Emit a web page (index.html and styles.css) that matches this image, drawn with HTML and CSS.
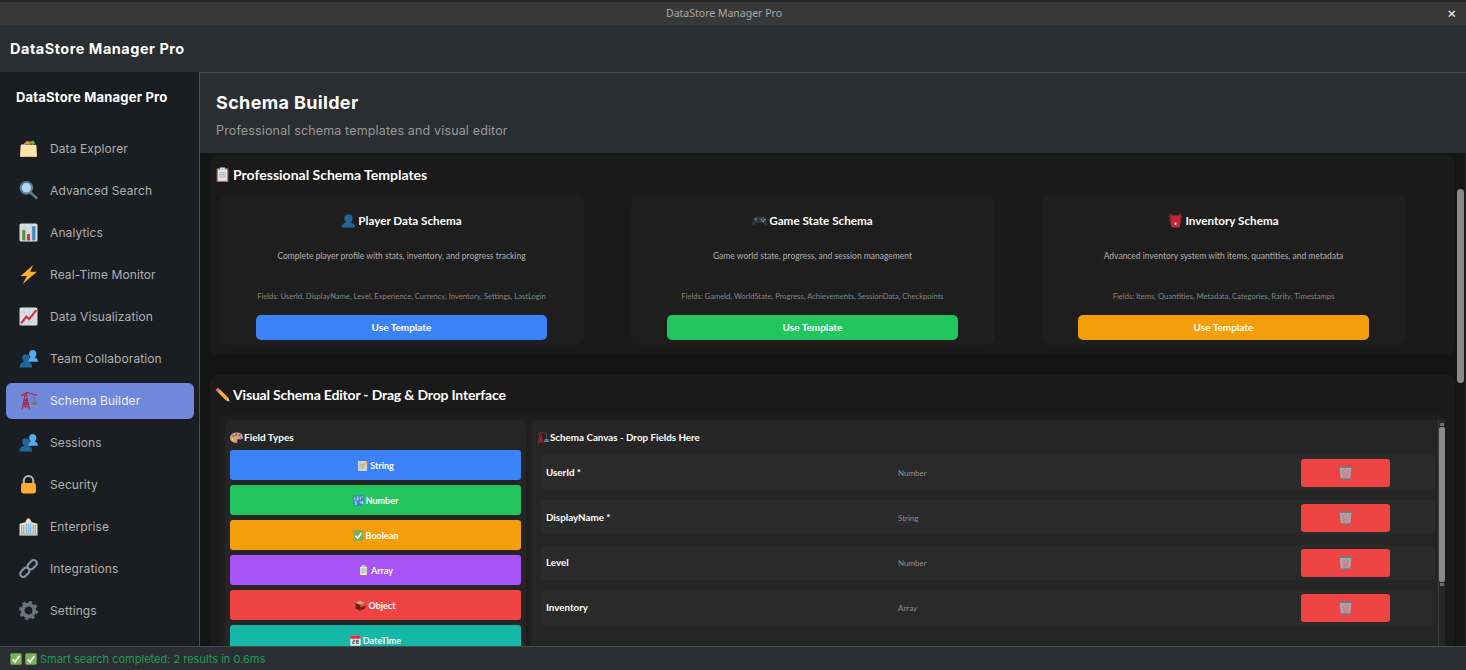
FILE: index.html
```html
<!DOCTYPE html>
<html lang="en">
<head>
<meta charset="utf-8">
<title>DataStore Manager Pro</title>
<link rel="stylesheet" href="styles.css">
</head>
<body>

<svg class="sprite" xmlns="http://www.w3.org/2000/svg">
<symbol id="i-folder" viewBox="0 0 36 36">
<path d="M9 9l6-5 8 1-2 6z" fill="#e8912c"/><path d="M20 6l7-3 4 5-6 3z" fill="#6bb04a"/><path d="M4 11l8-3 3 4-9 3z" fill="#9a6bc9"/>
<path d="M3 13q0-2 2-2h26q2 0 2 2l1 19q0 2-2 2H4q-2 0-2-2z" fill="#fde3ac"/><path d="M2 33h32v1H2z" fill="#c9a86c"/>
</symbol>
<symbol id="i-search" viewBox="0 0 36 36">
<path d="M22 22l11 10" stroke="#5f7d92" stroke-width="5" stroke-linecap="round"/>
<circle cx="14" cy="13" r="11" fill="#aed6f1" stroke="#5f7d92" stroke-width="4"/>
</symbol>
<symbol id="i-bars" viewBox="0 0 36 36">
<rect x="1" y="1" width="34" height="34" rx="3" fill="#d9e1e5"/>
<path d="M1 10h34M1 19h34M12 1v34M24 1v34" stroke="#bcc7cd"/>
<rect x="6" y="13" width="6" height="20" fill="#5c913b"/><rect x="15" y="21" width="6" height="12" fill="#dd2e44"/><rect x="25" y="6" width="6" height="27" fill="#3b88c3"/>
</symbol>
<symbol id="i-bolt" viewBox="0 0 36 36">
<path d="M27 0L3 21h12L7 36l27-23H21z" fill="#ffac33"/>
</symbol>
<symbol id="i-line" viewBox="0 0 36 36">
<rect x="1" y="1" width="34" height="34" rx="3" fill="#d9e1e5"/>
<path d="M1 10h34M1 19h34M1 28h34M10 1v34M19 1v34M28 1v34" stroke="#bcc7cd"/>
<path d="M4 31l10-13 5 5L33 6" fill="none" stroke="#dd2e44" stroke-width="4"/>
</symbol>
<symbol id="i-busts" viewBox="0 0 36 36">
<path d="M16 24q1-7 6-8-3-3-3-7 1-7 7-7t7 7q0 4-3 7 5 1 6 8z" fill="#55acee"/>
<path d="M1 35q0-10 9-11-4-3-4-8 1-6 7-6t7 6q0 5-4 8 9 1 9 11z" fill="#226699"/>
</symbol>
<symbol id="i-bust" viewBox="0 0 36 36">
<path d="M2 35q0-11 11-12-5-4-5-10 1-10 10-10t10 10q0 6-5 10 11 1 11 12z" fill="#226699"/>
</symbol>
<symbol id="i-crane" viewBox="0 0 36 36">
<path d="M6 35L11 8h3l6 27M8 24h10M7 30h12M9 16h7M8 24l9 6M17 24l-9 6M9 16l8 8M16 16l-7 8M4 9l11-6 19 5M12 8l3-5" fill="none" stroke="#b0223c" stroke-width="2"/>
<path d="M29 8v14" stroke="#66757f" stroke-width="1.5"/><rect x="24" y="22" width="11" height="5" fill="#66757f"/><rect x="22" y="27" width="14" height="3" fill="#8899a6"/>
</symbol>
<symbol id="i-lock" viewBox="0 0 36 36">
<path d="M9 17V11a9 9 0 0118 0v6" fill="none" stroke="#aab8c2" stroke-width="4"/>
<rect x="4" y="15" width="28" height="20" rx="4" fill="#ffac33"/>
</symbol>
<symbol id="i-bank" viewBox="0 0 36 36">
<path d="M1 13l11-3 2-5 4-3 4 3 2 5 11 3v22H1z" fill="#ebe0c8"/>
<path d="M5 15v17M9 15v17M14 12v20M18 12v20M22 12v20M27 15v17M31 15v17" stroke="#7db4de" stroke-width="2.4"/>
<path d="M1 33h34" stroke="#cdbd9d" stroke-width="3"/>
</symbol>
<symbol id="i-link" viewBox="0 0 36 36">
<g fill="none" stroke="#7f97a8" stroke-width="4">
<rect x="-10" y="-6" width="20" height="12" rx="6" transform="translate(11 25) rotate(-45)"/>
<rect x="-10" y="-6" width="20" height="12" rx="6" transform="translate(25 11) rotate(-45)"/>
</g>
</symbol>
<symbol id="i-gear" viewBox="0 0 36 36">
<circle cx="18" cy="18" r="11" fill="none" stroke="#66757f" stroke-width="7"/>
<circle cx="18" cy="18" r="15" fill="none" stroke="#66757f" stroke-width="6" stroke-dasharray="6 5.78"/>
</symbol>
<symbol id="i-check" viewBox="0 0 36 36">
<rect x="1" y="1" width="34" height="34" rx="4" fill="#77b255"/>
<path d="M8 19l7 8L28 9" fill="none" stroke="#fff" stroke-width="5.5"/>
</symbol>
<symbol id="i-clip" viewBox="0 0 36 36">
<rect x="4" y="3" width="28" height="33" rx="3" fill="#c1694f"/>
<rect x="7" y="6" width="22" height="27" fill="#e1e8ed"/>
<path d="M10 14h16M10 19h16M10 24h16" stroke="#8899a6" stroke-width="2"/>
<rect x="12" y="1" width="12" height="6" fill="#ccd6dd"/>
</symbol>
<symbol id="i-pencil" viewBox="0 0 36 36">
<path d="M1 7l6-6 5 5-6 6z" fill="#ea596e"/>
<path d="M6 12l6-6 2 2-6 6z" fill="#ccd6dd"/>
<path d="M8 14l6-6 18 18-6 6z" fill="#ffac33"/>
<path d="M26 32l6-6 3 9z" fill="#ffd8a8"/><path d="M32 34.4l2-1 1 2z" fill="#292f33"/>
</symbol>
<symbol id="i-pad" viewBox="0 0 36 36">
<path d="M3 12q2-3 7-3h16q5 0 7 3l3 14q0 5-5 3l-5-5H10l-5 5q-5 2-5-3z" fill="#31373d"/>
<circle cx="9" cy="15" r="3" fill="#66757f"/><circle cx="27" cy="12" r="2" fill="#dd2e44"/><circle cx="31" cy="16" r="2" fill="#55acee"/><circle cx="23" cy="16" r="2" fill="#77b255"/><circle cx="27" cy="20" r="2" fill="#ffac33"/>
</symbol>
<symbol id="i-pack" viewBox="0 0 36 36">
<path d="M2 8q1-7 7-7l3 6h12l3-6q6 0 7 7l-3 17H5z" fill="#7d2a20"/>
<rect x="7" y="6" width="22" height="29" rx="5" fill="#c8203a"/>
<rect x="16" y="23" width="4" height="6" fill="#fff"/>
</symbol>
<symbol id="i-palette" viewBox="0 0 36 36">
<path d="M18 4C8 4 0 10 0 19s8 14 17 14c5 0 4-4 3-6-1-3 1-5 5-4 6 1 11-1 11-6C36 9 28 4 18 4z" fill="#d99e82"/>
<circle cx="9" cy="14" r="3" fill="#5c913b"/><circle cx="17" cy="10" r="3" fill="#269"/><circle cx="26" cy="12" r="3" fill="#dd2e44"/><circle cx="7" cy="23" r="3" fill="#ffcc4d"/><circle cx="30" cy="18" r="2.5" fill="#9266cc"/>
</symbol>
<symbol id="i-memo" viewBox="0 0 36 36">
<rect x="3" y="3" width="30" height="33" rx="3" fill="#ccd6dd"/>
<path d="M8 14h16M8 20h12M8 26h16" stroke="#8899a6" stroke-width="2"/>
<path d="M16 22L31 3l4 3-15 19-5 2z" fill="#ffac33"/><path d="M31 3l2-2 3 3-1 2z" fill="#ea596e"/>
</symbol>
<symbol id="i-nums" viewBox="0 0 36 36">
<rect x="1" y="1" width="34" height="34" rx="3" fill="#3b88c3"/>
<path d="M6 6v10M13 6h4v5h-4v5h4M6 21h4v5H6m4 0v5H6M24 6v10M28 6h4M28 21h4v10M24 21v5h8" fill="none" stroke="#fff" stroke-width="2"/>
</symbol>
<symbol id="i-box" viewBox="0 0 36 36">
<path d="M18 2l16 8v17l-16 8z" fill="#a0041e"/><path d="M18 12L2 10v18l16 7z" fill="#662113"/>
<path d="M2 10L18 2l16 8-16 6z" fill="#d99e82"/><path d="M18 16l16-6v8l-16 6z" fill="#c1694f"/>
</symbol>
<symbol id="i-cal" viewBox="0 0 36 36">
<rect x="1" y="2" width="34" height="33" rx="3" fill="#e1e8ed"/>
<path d="M1 5q0-3 3-3h28q3 0 3 3v7H1z" fill="#dd2e44"/>
<path d="M9 17h6v5H9v6h6M21 17h6v11h-6zM21 22h6" fill="none" stroke="#31373d" stroke-width="2.5"/>
</symbol>
<symbol id="i-bin" viewBox="0 0 36 36">
<path d="M4 6h28l-3 29H7z" fill="#a4adb3"/>
<path d="M7 10l10 10-7 12M15 8l10 10-8 14M29 10L19 20l7 12M21 8L11 18l7 14" fill="none" stroke="#e85a5f" stroke-width="1.6"/>
<path d="M2 3h32v4H2zM7 32h22v4H7z" fill="#6f7a82"/>
</symbol>
</svg>

<header class="titlebar">
<span class="titlebar-text">DataStore Manager Pro</span>
<span class="titlebar-close">×</span>
</header>

<div class="appbar">DataStore Manager Pro</div>

<div class="workspace">
<aside class="sidebar">
<div class="sidebar-title">DataStore Manager Pro</div>
<nav class="nav">
<a class="nav-item"><svg class="nav-icon"><use href="#i-folder"/></svg>Data Explorer</a>
<a class="nav-item"><svg class="nav-icon"><use href="#i-search"/></svg>Advanced Search</a>
<a class="nav-item"><svg class="nav-icon"><use href="#i-bars"/></svg>Analytics</a>
<a class="nav-item"><svg class="nav-icon"><use href="#i-bolt"/></svg>Real-Time Monitor</a>
<a class="nav-item"><svg class="nav-icon"><use href="#i-line"/></svg>Data Visualization</a>
<a class="nav-item"><svg class="nav-icon"><use href="#i-busts"/></svg>Team Collaboration</a>
<a class="nav-item active"><svg class="nav-icon"><use href="#i-crane"/></svg>Schema Builder</a>
<a class="nav-item"><svg class="nav-icon"><use href="#i-busts"/></svg>Sessions</a>
<a class="nav-item"><svg class="nav-icon"><use href="#i-lock"/></svg>Security</a>
<a class="nav-item"><svg class="nav-icon"><use href="#i-bank"/></svg>Enterprise</a>
<a class="nav-item"><svg class="nav-icon"><use href="#i-link"/></svg>Integrations</a>
<a class="nav-item"><svg class="nav-icon"><use href="#i-gear"/></svg>Settings</a>
</nav>
</aside>

<main class="content">
<div class="page-head">
<h1>Schema Builder</h1>
<p>Professional schema templates and visual editor</p>
</div>

<div class="scroller">
<div class="scroll-body">

<section class="panel">
<h2 class="panel-title"><svg class="title-icon"><use href="#i-clip"/></svg>Professional Schema Templates</h2>
<div class="templates">
<div class="template">
<h3><svg class="card-icon"><use href="#i-bust"/></svg>Player Data Schema</h3>
<p class="template-desc">Complete player profile with stats, inventory, and progress tracking</p>
<p class="template-fields">Fields: UserId, DisplayName, Level, Experience, Currency, Inventory, Settings, LastLogin</p>
<button class="use-btn blue">Use Template</button>
</div>
<div class="template">
<h3><svg class="card-icon"><use href="#i-pad"/></svg>Game State Schema</h3>
<p class="template-desc">Game world state, progress, and session management</p>
<p class="template-fields">Fields: GameId, WorldState, Progress, Achievements, SessionData, Checkpoints</p>
<button class="use-btn green">Use Template</button>
</div>
<div class="template">
<h3><svg class="card-icon"><use href="#i-pack"/></svg>Inventory Schema</h3>
<p class="template-desc">Advanced inventory system with items, quantities, and metadata</p>
<p class="template-fields">Fields: Items, Quantities, Metadata, Categories, Rarity, Timestamps</p>
<button class="use-btn orange">Use Template</button>
</div>
</div>
</section>

<section class="panel editor-panel">
<h2 class="panel-title"><svg class="title-icon"><use href="#i-pencil"/></svg>Visual Schema Editor - Drag &amp; Drop Interface</h2>
<div class="editor">
<div class="field-types">
<h4><svg class="small-icon"><use href="#i-palette"/></svg>Field Types</h4>
<div class="type-list">
<button class="type-btn blue"><svg class="btn-icon"><use href="#i-memo"/></svg>String</button>
<button class="type-btn green"><svg class="btn-icon"><use href="#i-nums"/></svg>Number</button>
<button class="type-btn orange"><svg class="btn-icon"><use href="#i-check"/></svg>Boolean</button>
<button class="type-btn purple"><svg class="btn-icon"><use href="#i-clip"/></svg>Array</button>
<button class="type-btn red"><svg class="btn-icon"><use href="#i-box"/></svg>Object</button>
<button class="type-btn teal"><svg class="btn-icon"><use href="#i-cal"/></svg>DateTime</button>
</div>
</div>
<div class="canvas">
<h4><svg class="small-icon"><use href="#i-crane"/></svg>Schema Canvas - Drop Fields Here</h4>
<div class="field-row"><span class="field-name">UserId *</span><span class="field-type">Number</span><button class="del-btn"><svg class="del-icon"><use href="#i-bin"/></svg></button></div>
<div class="field-row"><span class="field-name">DisplayName *</span><span class="field-type">String</span><button class="del-btn"><svg class="del-icon"><use href="#i-bin"/></svg></button></div>
<div class="field-row"><span class="field-name">Level</span><span class="field-type">Number</span><button class="del-btn"><svg class="del-icon"><use href="#i-bin"/></svg></button></div>
<div class="field-row"><span class="field-name">Inventory</span><span class="field-type">Array</span><button class="del-btn"><svg class="del-icon"><use href="#i-bin"/></svg></button></div>
</div>
<div class="canvas-scrollbar"><div class="canvas-thumb"></div></div>
</div>
</section>

</div>
<div class="scrollbar"><div class="scrollbar-thumb"></div></div>
</div>
</main>
</div>

<footer class="statusbar">
<svg class="status-icon"><use href="#i-check"/></svg>
<svg class="status-icon"><use href="#i-check"/></svg>
<span>Smart search completed: 2 results in 0.6ms</span>
</footer>

</body>
</html>
```

FILE: styles.css
```css
* {
    box-sizing: border-box;
}
html, body {
    height: 100%;
}
body {
    margin: 0;
    display: flex;
    flex-direction: column;
    overflow: hidden;
    background: #141414;
    color: #fff;
    font-family: "Lato", "Noto Sans", sans-serif;
}
h1, h2, h3, h4, p {
    margin: 0;
}
button {
    border: 0;
    color: #fff;
    font-family: inherit;
    font-weight: 700;
}
.sprite {
    display: none;
}

/* window chrome */
.titlebar {
    height: 25px;
    flex: none;
    display: grid;
    grid-template-columns: 1fr auto 1fr;
    align-items: center;
    background: #383838;
    border-top: 2px solid #262626;
    padding: 0 18px 2px 0;
    color: #a8a8a8;
    font-family: "Noto Sans", sans-serif;
    font-size: 10.5px;
}
.titlebar-text {
    grid-column: 2;
}
.titlebar-close {
    grid-column: 3;
    justify-self: end;
    margin-right: -8px;
    color: #fff;
    font-size: 15px;
}
.appbar {
    height: 47px;
    flex: none;
    display: flex;
    align-items: center;
    padding-left: 10px;
    background: #2a2d32;
    font-family: "Inter", sans-serif;
    font-size: 14.5px;
    font-weight: 700;
    letter-spacing: 0.5px;
}

.workspace {
    flex: 1;
    min-height: 0;
    display: flex;
}

/* sidebar */
.sidebar {
    width: 199px;
    flex: none;
    background: #1a1d21;
    font-family: "Inter", sans-serif;
}
.sidebar-title {
    padding: 17px 0 0 16px;
    height: 59px;
    font-size: 13px;
    font-weight: 700;
    letter-spacing: 0.2px;
}
.nav {
    display: flex;
    flex-direction: column;
    gap: 6px;
    padding: 0 5px 0 6px;
}
.nav-item {
    height: 36px;
    display: flex;
    align-items: center;
    gap: 12px;
    padding: 0 0 2px 13px;
    border-radius: 6px;
    color: #b0b0b0;
    font-size: 12px;
    letter-spacing: 0.1px;
}
.nav-item.active {
    background: #7088db;
    color: #eef0fa;
}
.nav-icon {
    width: 19px;
    height: 19px;
}

/* main area */
.content {
    flex: 1;
    min-width: 0;
    display: flex;
    flex-direction: column;
    border-left: 1px solid #4a4d52;
    border-top: 1px solid #4a4d52;
}
.page-head {
    height: 80px;
    flex: none;
    padding: 20px 0 0 16px;
    background: #2a2d32;
    font-family: "Inter", sans-serif;
}
.page-head h1 {
    font-size: 18px;
    font-weight: 700;
    line-height: 19px;
    letter-spacing: 0.35px;
}
.page-head p {
    margin-top: 10px;
    color: #9a9a9a;
    font-size: 12.5px;
    line-height: 17px;
    letter-spacing: 0.15px;
}
.scroller {
    flex: 1;
    min-height: 0;
    display: flex;
}
.scroll-body {
    flex: 1;
    min-width: 0;
    overflow: hidden;
    padding: 2px 1px 0 10px;
}
.scrollbar {
    width: 10px;
    flex: none;
    padding: 36px 1px 0 1px;
    background: #171717;
    border-right: 1px solid #262626;
}
.scrollbar-thumb {
    height: 194px;
    border-radius: 4px;
    background: #8a8a8a;
}

/* panels */
.panel {
    padding: 10px 10px 10px 10px;
    border-radius: 8px;
    background: #1a1a1a;
}
.editor-panel {
    margin-top: 20px;
    padding-bottom: 0;
}
.panel-title {
    height: 20px;
    display: flex;
    align-items: center;
    gap: 3px;
    margin: 0 0 10px -5px;
    padding-bottom: 2px;
    font-size: 14px;
    font-weight: 700;
}
.editor-panel .panel-title {
    letter-spacing: -0.18px;
}
.title-icon {
    width: 15px;
    height: 15px;
}

/* template cards */
.templates {
    display: grid;
    grid-template-columns: repeat(3, 364px);
    column-gap: 47px;
}
.template {
    height: 150px;
    display: flex;
    flex-direction: column;
    align-items: center;
    padding: 16px 1px 0 0;
    border-radius: 8px;
    background: #1e1e1e;
}
.template h3 {
    height: 18px;
    display: flex;
    align-items: center;
    gap: 2px;
    font-size: 11.7px;
    font-weight: 700;
}
.card-icon {
    width: 15px;
    height: 15px;
}
.template-desc {
    margin-top: 21px;
    height: 12px;
    color: #b0b0b0;
    font-size: 8.5px;
    line-height: 12px;
}
.template-fields {
    margin-top: 29px;
    height: 11px;
    color: #858585;
    font-size: 7.6px;
    line-height: 11px;
}
.use-btn {
    width: 291px;
    height: 25px;
    margin-top: 13px;
    padding: 0 0 2px;
    border-radius: 5px;
    font-size: 10px;
}
.blue { background: #3b82f6; }
.green { background: #22c55e; }
.orange { background: #f59e0b; }
.purple { background: #a855f7; }
.red { background: #ef4444; }
.teal { background: #14b8a6; }

/* editor */
.editor {
    display: flex;
    gap: 5px;
    height: 240px;
    padding: 5px 0 0 5px;
    border-radius: 8px;
    background: #1e1e1e;
}
.field-types {
    width: 301px;
    flex: none;
    padding: 8px 5px 0;
    border-radius: 6px 6px 0 0;
    background: #252525;
}
.editor h4 {
    height: 18px;
    display: flex;
    align-items: center;
    gap: 2px;
    font-size: 10px;
    font-weight: 700;
}
.canvas h4 {
    margin-bottom: 9px;
    font-size: 9.8px;
}
.small-icon {
    width: 13px;
    height: 13px;
    margin-right: -1px;
}
.type-list {
    display: flex;
    flex-direction: column;
    gap: 5px;
    margin-top: 4px;
}
.type-btn {
    height: 30px;
    flex: none;
    display: flex;
    align-items: center;
    justify-content: center;
    gap: 2px;
    padding-top: 2px;
    border-radius: 3px;
    font-size: 9px;
}
.btn-icon {
    width: 11px;
    height: 11px;
}
.canvas {
    flex: 1;
    min-width: 0;
    margin-right: -5px;
    padding: 8px 3px 0 5px;
    border-radius: 6px 0 0 0;
    background: #252525;
}
.field-row {
    height: 35px;
    display: grid;
    grid-template-columns: 352px 403px 89px;
    align-items: center;
    margin: 0 0 10px 5px;
    padding-left: 5px;
    border-radius: 4px;
    background: #2a2a2a;
}
.field-name {
    padding-bottom: 2px;
    font-size: 9.8px;
    font-weight: 700;
}
.field-type {
    color: #8f8f8f;
    font-size: 8px;
}
.del-btn {
    height: 28px;
    display: flex;
    align-items: center;
    justify-content: center;
    border-radius: 3px;
    background: #ef4444;
}
.del-icon {
    width: 15px;
    height: 15px;
}
.canvas-scrollbar {
    width: 7px;
    flex: none;
    padding: 3px 0 0;
    background: #252525;
    border-left: 1px solid #3a3a3a;
}
.canvas-scrollbar::before,
.canvas-scrollbar::after {
    content: "";
    display: block;
    height: 3px;
    margin: 0 1px;
    background: #6e6e6e;
}
.canvas-thumb {
    height: 155px;
    margin: 1px 0;
    border-radius: 2px;
    background: #8a8a8a;
}

/* status */
.statusbar {
    height: 24px;
    flex: none;
    display: flex;
    align-items: center;
    padding-left: 10px;
    gap: 3px;
    background: #2a2d32;
    border-top: 1px solid #4a4d52;
    color: #1f9d55;
    font-family: "Inter", sans-serif;
    font-size: 11px;
}
.status-icon {
    width: 12px;
    height: 12px;
}
```
